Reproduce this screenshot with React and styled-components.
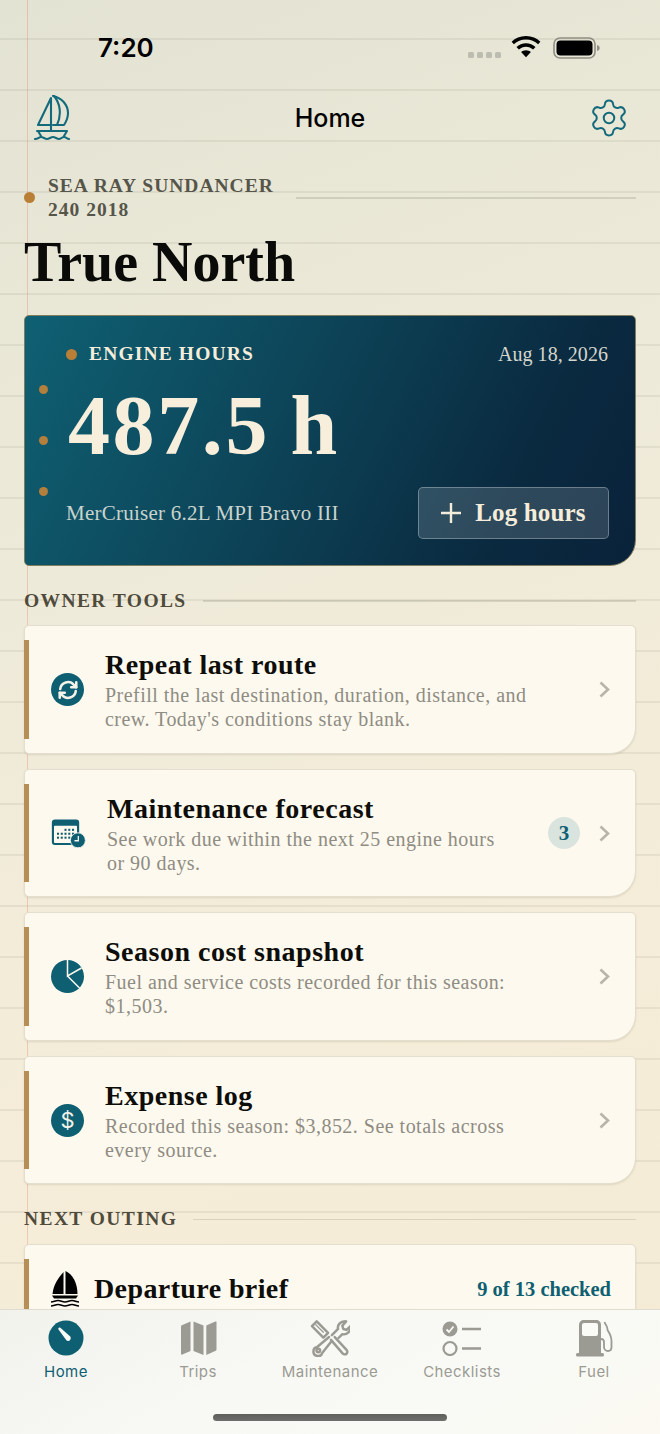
import React from "react";
import styled, { createGlobalStyle } from "styled-components";

const SERIF = `"Liberation Serif", "Times New Roman", serif`;
const SANS = `Inter, "Liberation Sans", Arial, sans-serif`;
const TEAL = "#0f5f72";

const Global = createGlobalStyle`
  html, body { margin: 0; padding: 0; }
  body { width: 660px; height: 1434px; overflow: hidden; background: #efe9d8; }
  * { box-sizing: border-box; }
`;

const Page = styled.div`
  position: relative;
  width: 660px;
  height: 1434px;
  overflow: hidden;
  background-color: #ece8d6;
  background-image:
    linear-gradient(90deg, transparent 26.5px, rgba(225, 130, 100, 0.34) 26.5px, rgba(225, 130, 100, 0.34) 28px, transparent 28px),
    repeating-linear-gradient(180deg, transparent 0, transparent 38.2px, rgba(110, 110, 90, 0.105) 38.2px, rgba(110, 110, 90, 0.105) 39.6px, transparent 39.6px, transparent 51px),
    linear-gradient(160deg, #e3e3d3 0%, #eeead9 35%, #f5edd9 70%, #f5ebd5 100%);
`;

const StatusBar = styled.div`
  height: 88px;
  display: flex;
  align-items: flex-start;
  justify-content: space-between;
  padding: 32px 60px 0 98px;
`;
const Clock = styled.div`
  font: 600 26px/32px ${SANS};
  color: #000;
`;
const StatusIcons = styled.div`
  display: flex;
  align-items: flex-start;
  gap: 11px;
  padding-top: 4px;
`;

const NavBar = styled.div`
  height: 60px;
  display: flex;
  align-items: center;
  justify-content: space-between;
  padding: 0 30px 0 34px;
`;
const NavTitle = styled.div`
  margin-left: 2px;
  font: 500 25px/32px ${SANS};
  color: #000;
`;

const Content = styled.div`
  padding: 26px 24px 0;
`;

const Eyebrow = styled.div`
  position: relative;
  display: flex;
  align-items: center;
  gap: 22px;
  padding-left: 24px;
`;
const EyebrowDot = styled.span`
  position: absolute;
  left: 0;
  top: 18px;
  width: 11px;
  height: 11px;
  border-radius: 50%;
  background: #b97f37;
`;
const EyebrowText = styled.div`
  font: 700 19.5px/24px ${SERIF};
  letter-spacing: 1px;
  color: #56554a;
  white-space: nowrap;
`;
const Rule = styled.div`
  flex: 1;
  height: 1.6px;
  background: rgba(120, 120, 100, 0.22);
`;
const BigTitle = styled.h1`
  margin: 8px 0 0;
  font: 700 56px/64px ${SERIF};
  color: #0a0a08;
`;

const Hero = styled.section`
  position: relative;
  margin-top: 21px;
  height: 251px;
  padding: 26px 26px 26px 41px;
  display: flex;
  flex-direction: column;
  border-radius: 5px 5px 26px 5px;
  border: 1px solid #7f7c5f;
  background: linear-gradient(116deg, #0f6073 0%, #0d4458 42%, #0a2a40 78%, #09223a 100%);
  color: #f5eddb;
`;
const Hole = styled.span`
  position: absolute;
  left: 14px;
  top: ${(p) => p.$top}px;
  width: 9px;
  height: 9px;
  border-radius: 50%;
  background: #b37f3c;
`;
const HeroTop = styled.div`
  display: flex;
  align-items: center;
  justify-content: space-between;
  height: 24px;
  padding-right: 1px;
`;
const HeroLabel = styled.div`
  display: flex;
  align-items: center;
  gap: 12px;
  font: 700 19.5px/24px ${SERIF};
  letter-spacing: 1.15px;
`;
const HeroDot = styled.span`
  width: 11px;
  height: 11px;
  border-radius: 50%;
  background: #b97f37;
`;
const HeroDate = styled.div`
  font: 400 20px/24px ${SERIF};
  letter-spacing: 0.05px;
  color: #d3d6cd;
`;
const HeroValue = styled.div`
  margin: 10px 0 0 2px;
  font: 700 84px/100px ${SERIF};
  letter-spacing: 2.6px;
  word-spacing: -3px;
  color: #f7eedb;
`;
const HeroBottom = styled.div`
  margin-top: auto;
  display: flex;
  align-items: center;
  justify-content: space-between;
`;
const EngineName = styled.div`
  font: 400 21px/26px ${SERIF};
  letter-spacing: 0.24px;
  color: #c9d3cd;
`;
const LogButton = styled.button`
  width: 191px;
  height: 52px;
  display: flex;
  align-items: center;
  justify-content: center;
  gap: 14px;
  padding: 0;
  border: 1.5px solid rgba(255, 255, 255, 0.3);
  border-radius: 5px;
  background: rgba(255, 255, 255, 0.15);
  color: #f5eddb;
  font: 700 25px/30px ${SERIF};
  letter-spacing: 0.15px;
`;

const SectionHead = styled.div`
  display: flex;
  align-items: center;
  gap: 16px;
  margin: ${(p) => p.$top}px 0 12.4px;
`;
const SectionTitle = styled.h2`
  margin: 0;
  font: 700 19.5px/24px ${SERIF};
  letter-spacing: 1.4px;
  color: #4f4b3c;
  white-space: nowrap;
`;

const ToolList = styled.div`
  display: flex;
  flex-direction: column;
  gap: 14.9px;
`;
const Card = styled.article`
  position: relative;
  height: 128.6px;
  display: flex;
  align-items: center;
  padding: 0 24px 0 26px;
  border: 1px solid #e3dece;
  border-radius: 5px 5px 26px 5px;
  background: #fdf9ee;
  box-shadow: 0 1px 2px rgba(90, 80, 50, 0.14);
`;
const Accent = styled.span`
  position: absolute;
  left: -1px;
  top: 14px;
  bottom: 14px;
  width: 5px;
  background: #b58f55;
`;
const IconSlot = styled.div`
  flex: none;
  width: ${(p) => p.$w}px;
  display: flex;
  align-items: center;
  margin-right: ${(p) => p.$gap}px;
`;
const CardText = styled.div`
  flex: 1;
  min-width: 0;
  padding-top: 2px;
`;
const CardTitle = styled.h3`
  margin: 0;
  font: 700 28px/30px ${SERIF};
  letter-spacing: 0.5px;
  color: #0d0d0a;
`;
const CardDesc = styled.p`
  margin: 3px 0 0;
  font: 400 20px/24px ${SERIF};
  letter-spacing: 0.48px;
  color: #8f8c83;
`;
const Badge = styled.span`
  flex: none;
  width: 32px;
  height: 32px;
  margin: 0 18px 0 14px;
  display: flex;
  align-items: center;
  justify-content: center;
  border-radius: 50%;
  background: #d9e4de;
  color: ${TEAL};
  font: 700 21px/1 ${SERIF};
`;
const Chevron = styled.svg`
  flex: none;
  width: 13px;
  height: 17px;
`;
const Round = styled.div`
  width: 33px;
  height: 33px;
  border-radius: 50%;
  background: ${TEAL};
  display: flex;
  align-items: center;
  justify-content: center;
  color: #f4f3ea;
  font: 400 22px/1 ${SANS};
`;

const BriefCard = styled(Card)`
  height: 200px;
  align-items: flex-start;
  padding: 26px 24px 0 25px;
`;
const BriefTitle = styled(CardTitle)`
  flex: 1;
  line-height: 36px;
  letter-spacing: 0.4px;
`;
const BriefCount = styled.div`
  font: 700 20.5px/36px ${SERIF};
  color: ${TEAL};
`;

const TabBar = styled.nav`
  position: absolute;
  left: 0;
  right: 0;
  bottom: 0;
  height: 125px;
  padding: 8px 0 0;
  display: grid;
  grid-template-columns: repeat(5, 1fr);
  align-items: start;
  border-top: 1px solid #e0ddd0;
  background: linear-gradient(150deg, #f1f2ec 0%, #f8f9f5 40%, #f9faf6 70%, #fbf9f1 100%);
`;
const Tab = styled.div`
  display: flex;
  flex-direction: column;
  align-items: center;
  font: 400 15px/20px ${SANS};
  letter-spacing: 0.45px;
  color: ${(p) => (p.$active ? TEAL : "#9b9a93")};
`;
const TabIcon = styled.div`
  height: 40px;
  margin-bottom: 4px;
  display: flex;
  align-items: center;
  justify-content: center;
`;
const HomeBar = styled.div`
  position: absolute;
  left: 213px;
  bottom: 13px;
  width: 234px;
  height: 7px;
  border-radius: 4px;
  background: linear-gradient(180deg, #5f5f5c, #6e6e6c);
`;

const Sail = () => (
  <svg width="36" height="46" viewBox="0 0 36 46" fill="none" stroke="#136a7c" strokeWidth="2.1" strokeLinejoin="round" strokeLinecap="round">
    <path d="M17 3 4 30h13V3Z" />
    <path d="M19 1c9 2 15 9 15 17 0 5-2 9-4 12H19" />
    <path d="M20 1c6 7 8 18 3 29" />
    <path d="M17 30v6M3 36h30l-3 5" />
    <path d="M4 36l3 5M1 44c3 0 4-2 6-2s4 2 6 2 4-2 6-2 4 2 6 2 3-2 5-2 3 2 5 2" />
  </svg>
);
const Gear = () => (
  <svg width="42" height="42" viewBox="0 0 24 24" fill="none" stroke="#136a7c" strokeWidth="1.15" strokeLinecap="round" strokeLinejoin="round">
    <path d="M9.671 4.136a2.34 2.34 0 0 1 4.659 0 2.34 2.34 0 0 0 3.319 1.915 2.34 2.34 0 0 1 2.33 4.033 2.34 2.34 0 0 0 0 3.831 2.34 2.34 0 0 1-2.33 4.033 2.34 2.34 0 0 0-3.319 1.915 2.34 2.34 0 0 1-4.659 0 2.34 2.34 0 0 0-3.32-1.915 2.34 2.34 0 0 1-2.33-4.033 2.34 2.34 0 0 0 0-3.831A2.34 2.34 0 0 1 6.35 6.051a2.34 2.34 0 0 0 3.319-1.915" />
    <circle cx="12" cy="12" r="3" />
  </svg>
);
const Cellular = () => (
  <svg width="34" height="8" viewBox="0 0 34 8" style={{ marginTop: 15, marginRight: -2 }}>
    {[0, 9, 18, 27].map((x) => (
      <rect key={x} x={x} y="1" width="6" height="6" rx="1.6" fill="#bdbcb1" />
    ))}
  </svg>
);
const Wifi = () => (
  <svg width="30" height="22" viewBox="0 0 30 22" fill="#000">
    <path d="M15 0C9.2 0 4.2 2.2.6 5.7l2.3 2.6C6 5.300 10.300 3.500 15 3.500s9 1.800 12.100 4.800l2.300-2.600C25.800 2.200 20.800 0 15 0Z" />
    <path d="M15 7.200c-3.700 0-7 1.400-9.500 3.700l2.400 2.600c1.900-1.700 4.400-2.800 7.100-2.800s5.200 1.100 7.100 2.800l2.400-2.600C22 8.600 18.700 7.200 15 7.200Z" />
    <path d="M15 14.200c-1.900 0-3.600.7-4.900 1.900L15 21.300l4.900-5.200c-1.300-1.200-3-1.900-4.900-1.900Z" />
  </svg>
);
const Battery = () => (
  <svg width="47" height="22" viewBox="0 0 47 22" style={{ marginLeft: 1, marginTop: 1 }}>
    <rect x="1" y="1" width="41" height="20" rx="6" fill="none" stroke="#8f8e83" strokeWidth="1.6" />
    <rect x="3.500" y="3.500" width="36" height="15" rx="4" fill="#000" />
    <path d="M44 8c1.800.4 2.700 1.500 2.700 3s-.9 2.600-2.700 3Z" fill="#8f8e83" />
  </svg>
);

const RefreshIcon = () => (
  <Round>
    <svg width="22" height="22" viewBox="0 0 24 24" fill="none" stroke="#f4f3ea" strokeWidth="2.8" strokeLinecap="round" strokeLinejoin="round">
      <path d="M3.500 11a8.500 8.500 0 0 1 15-4.500L21 9" />
      <path d="M21 3.500V9h-5.500" />
      <path d="M20.500 13a8.500 8.500 0 0 1-15 4.500L3 15" />
      <path d="M3 20.500V15h5.500" />
    </svg>
  </Round>
);
const CalendarIcon = () => (
  <svg width="41" height="35" viewBox="0 0 41 35">
    <rect x="1" y="1" width="32" height="30" rx="3.500" fill={TEAL} />
    <rect x="3.500" y="8.500" width="27" height="20" rx="1" fill="#fdf9ee" />
    {[0, 1, 2].map((r) =>
      [0, 1, 2, 3, 4].map((c) =>
        (r === 0 && c < 2) || (r === 2 && c > 3) ? null : (
          <rect key={`${r}-${c}`} x={7 + c * 4.400} y={12 + r * 4.600} width="2.400" height="2.400" fill={TEAL} />
        )
      )
    )}
    <circle cx="31.500" cy="25.500" r="8.800" fill={TEAL} stroke="#fdf9ee" strokeWidth="1" />
    <path d="M32 20.500v5.500h-4.500" fill="none" stroke="#fdf9ee" strokeWidth="1.500" />
  </svg>
);
const PieIcon = () => (
  <Round>
    <svg width="33" height="33" viewBox="0 0 33 33" fill="none" stroke="#fdf9ee" strokeWidth="1.500">
      <path d="M16.500 0v16l14-8M16.500 16l12 12" />
    </svg>
  </Round>
);
const DollarIcon = () => <Round>$</Round>;
const SolidBoat = () => (
  <svg width="30" height="36" viewBox="0 0 30 36" fill="#000">
    <path d="M13.500 1C8.500 7 3.500 13 2.500 23h11Z" />
    <path d="M15.500 0c7 3 12 12 12 23h-12Z" />
    <path d="M2 24.500h26l-2 3h-22Z" />
    <path d="M1 31c3 0 4-1.500 7-1.500S12 31 15 31s4-1.500 7-1.500 4 1.500 7 1.500" fill="none" stroke="#000" strokeWidth="1.700" />
    <path d="M1 35c3 0 4-1.500 7-1.500S12 35 15 35s4-1.500 7-1.500 4 1.500 7 1.500" fill="none" stroke="#000" strokeWidth="1.700" />
  </svg>
);

const HomeTab = () => (
  <svg width="36" height="36" viewBox="0 0 36 36">
    <circle cx="18" cy="18" r="17.500" fill={TEAL} />
    <path d="M10.500 9.500c-.8-1.200.6-2.600 1.800-1.700l9.700 8.500c1 .9 1 2.800-.1 3.900-1.100 1-2.800 1-3.700-.3Z" fill="#fdfdf8" />
  </svg>
);
const MapTab = () => (
  <svg width="37" height="36" viewBox="0 0 37 36" fill="#9b9a93">
    <path d="M1 6.500c0-.6.3-1 .8-1.300L10.500 1.500V31L2.300 34.600C1.600 34.900 1 34.500 1 33.800Z" />
    <path d="M13.500 1.500l10 4V35l-10-4Z" />
    <path d="M26.500 5.500l9-4c.7-.3 1.200.1 1.200.8V29.500c0 .6-.3 1-.8 1.300L26.500 35Z" transform="translate(-.2 0)" />
  </svg>
);
const ToolsTab = () => (
  <svg width="40" height="38" viewBox="0 0 42 40" fill="none" stroke="#9b9a93" strokeWidth="2.600" strokeLinejoin="round" strokeLinecap="round">
    <path d="M2 7.500 7 2.500l12 12-5 5Z" />
    <path d="M6 6l8 8M8.500 4l8 8" strokeWidth="1.300" />
    <path d="M20 19 7.500 29.500a4.800 4.800 0 1 0 5.500 6L23 23" />
    <circle cx="8.700" cy="33.200" r="1.900" />
    <path d="M23 17 29.500 10.500c-1-4 2-8.500 8.500-8l-4 4.500 1 3.500 3.500 1 4-4c.5 6-4 9.500-8.500 8.500L30 20" />
    <path d="M22 22l12.500 14.500c1 1 3 1 4-.1s1-2.900-.1-3.900L26 19" />
  </svg>
);
const ChecksTab = () => (
  <svg width="40" height="36" viewBox="0 0 40 36" fill="none">
    <circle cx="8" cy="9" r="7.500" fill="#9b9a93" />
    <path d="M4.500 9.500 7 12l4.500-5.500" stroke="#fafaf6" strokeWidth="1.800" />
    <circle cx="8" cy="28.500" r="6.500" stroke="#9b9a93" strokeWidth="2.200" />
    <path d="M20 9h19M20 28.500h19" stroke="#9b9a93" strokeWidth="2.600" />
  </svg>
);
const FuelTab = () => (
  <svg width="37" height="38" viewBox="0 0 37 38" fill="none">
    <path d="M3 34V6c0-3 2-5 5-5h12c3 0 5 2 5 5v28Z" fill="#9b9a93" />
    <rect x="6" y="4" width="16" height="13" rx="2" fill="#fafaf6" />
    <rect x="0" y="34" width="28" height="3.500" rx="1.500" fill="#9b9a93" />
    <path d="M28.500 3c1 3 2 3 2.500 5 .5 1.500 .5 3 .5 3 2 3 4 6 4 11v6c0 2-1 4-3.500 4S28 30 28 28v-5c0-2-1-3-3-3" stroke="#9b9a93" strokeWidth="1.800" />
  </svg>
);

const ChevronRight = () => (
  <Chevron viewBox="0 0 13 17" fill="none" stroke="#b9b4a8" strokeWidth="2.600">
    <path d="M2.500 1.500 10 8.500l-7.500 7" />
  </Chevron>
);

const tools = [
  { icon: <RefreshIcon />, w: 33, title: "Repeat last route", desc: <>Prefill the last destination, duration, distance, and<br />crew. Today's conditions stay blank.</> },
  { icon: <CalendarIcon />, w: 35, title: "Maintenance forecast", desc: <>See work due within the next 25 engine hours<br />or 90 days.</>, badge: 3 },
  { icon: <PieIcon />, w: 33, title: "Season cost snapshot", desc: <>Fuel and service costs recorded for this season:<br />$1,503.</> },
  { icon: <DollarIcon />, w: 33, title: "Expense log", desc: <>Recorded this season: $3,852. See totals across<br />every source.</> },
];

const tabs = [
  { label: "Home", icon: <HomeTab />, active: true },
  { label: "Trips", icon: <MapTab /> },
  { label: "Maintenance", icon: <ToolsTab /> },
  { label: "Checklists", icon: <ChecksTab /> },
  { label: "Fuel", icon: <FuelTab /> },
];

export default function App() {
  return (
    <Page>
      <Global />
      <StatusBar>
        <Clock>7:20</Clock>
        <StatusIcons>
          <Cellular />
          <Wifi />
          <Battery />
        </StatusIcons>
      </StatusBar>
      <NavBar>
        <Sail />
        <NavTitle>Home</NavTitle>
        <Gear />
      </NavBar>
      <Content>
        <Eyebrow>
          <EyebrowDot />
          <EyebrowText>SEA RAY SUNDANCER<br />240 2018</EyebrowText>
          <Rule />
        </Eyebrow>
        <BigTitle>True North</BigTitle>
        <Hero>
          <Hole $top={69} />
          <Hole $top={120} />
          <Hole $top={171} />
          <HeroTop>
            <HeroLabel><HeroDot />ENGINE HOURS</HeroLabel>
            <HeroDate>Aug 18, 2026</HeroDate>
          </HeroTop>
          <HeroValue>487.5 h</HeroValue>
          <HeroBottom>
            <EngineName>MerCruiser 6.2L MPI Bravo III</EngineName>
            <LogButton>
              <svg width="20" height="20" viewBox="0 0 20 20" stroke="#f5eddb" strokeWidth="2.400"><path d="M10 0v20M0 10h20" /></svg>
              Log hours
            </LogButton>
          </HeroBottom>
        </Hero>
        <SectionHead $top={23}>
          <SectionTitle>OWNER TOOLS</SectionTitle>
          <Rule />
        </SectionHead>
        <ToolList>
          {tools.map((t) => (
            <Card key={t.title}>
              <Accent />
              <IconSlot $w={t.w} $gap={21}>{t.icon}</IconSlot>
              <CardText>
                <CardTitle>{t.title}</CardTitle>
                <CardDesc>{t.desc}</CardDesc>
              </CardText>
              {t.badge ? <Badge>{t.badge}</Badge> : null}
              <ChevronRight />
            </Card>
          ))}
        </ToolList>
        <SectionHead $top={23}>
          <SectionTitle>NEXT OUTING</SectionTitle>
          <Rule />
        </SectionHead>
        <BriefCard>
          <Accent />
          <IconSlot $w={30} $gap={14}><SolidBoat /></IconSlot>
          <BriefTitle>Departure brief</BriefTitle>
          <BriefCount>9 of 13 checked</BriefCount>
        </BriefCard>
      </Content>
      <TabBar>
        {tabs.map((t) => (
          <Tab key={t.label} $active={t.active}>
            <TabIcon>{t.icon}</TabIcon>
            {t.label}
          </Tab>
        ))}
      </TabBar>
      <HomeBar />
    </Page>
  );
}
